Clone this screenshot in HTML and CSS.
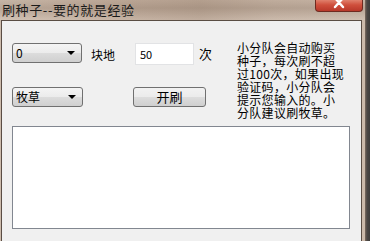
FILE: index.html
```html
<!DOCTYPE html>
<html lang="zh-CN">
<head>
    <meta charset="UTF-8">
    <title>刷种子--要的就是经验</title>
    <link rel="stylesheet" href="styles.css">
</head>
<body>
    <div class="window">
        <!-- title bar -->
        <div class="titlebar">
            <span class="title">刷种子--要的就是经验</span>
            <div class="close-btn">
                <svg width="12" height="9" viewBox="0 0 12 9">
                    <path d="M2 -2 L10 7 M10 -2 L2 7" stroke="#fff" stroke-width="2.4" stroke-linecap="round"/>
                </svg>
            </div>
        </div>

        <div class="client">
            <div class="top">
                <div class="controls">
                    <div class="row">
                        <div class="combo combo-count"><span>0</span><i class="arrow"></i></div>
                        <span class="label">块地</span>
                        <div class="edit">50</div>
                        <span class="label label-times">次</span>
                    </div>
                    <div class="row row-second">
                        <div class="combo combo-seed"><span>牧草</span><i class="arrow"></i></div>
                        <div class="button">开刷</div>
                    </div>
                </div>
                <p class="tip">
                    小分队会自动购买<br>
                    种子，每次刷不超<br>
                    过100次，如果出现<br>
                    验证码，小分队会<br>
                    提示您输入的。小<br>
                    分队建议刷牧草。
                </p>
            </div>
            <div class="log"></div>
        </div>
    </div>
    <div class="desk-edge"></div>
</body>
</html>
```

FILE: styles.css
```css
body {
    margin: 0;
    width: 370px;
    height: 241px;
    overflow: hidden;
    display: flex;
    font-family: "Noto Sans CJK SC", "Noto Sans", sans-serif;
    font-size: 12px;
    color: #000;
    background: #4a4644;
}
.window {
    width: 365px;
    height: 241px;
    display: flex;
    flex-direction: column;
    background: linear-gradient(90deg, #cdbcad 0%, #c2ad9c 30%, #b9a493 55%, #c6b3a3 75%, #cbb9aa 100%);
}
.desk-edge {
    flex: 1;
    background: linear-gradient(90deg, #7d6c60 0px, #4c4744 2px, #3f3d3c 100%);
}
.titlebar {
    height: 20px;
    display: flex;
    align-items: flex-start;
    background: linear-gradient(180deg, rgba(120, 100, 85, 0.08) 0%, rgba(120, 100, 85, 0.25) 40%, rgba(255, 255, 255, 0.1) 100%);
}
.title {
    margin: 0 0 0 2px;
    font-size: 13px;
    line-height: 19px;
    letter-spacing: 0.6px;
    color: #1a1a1a;
}
.close-btn {
    margin-left: auto;
    margin-right: 2px;
    width: 46px;
    height: 11px;
    border: 1px solid #6e2a20;
    border-top: none;
    border-radius: 0 0 4px 4px;
    background: linear-gradient(180deg, #e0806c 0%, #cf4f3c 45%, #b8382a 100%);
    display: flex;
    justify-content: center;
    align-items: flex-start;
}
.client {
    flex: 1;
    margin: 0 3px 0 1px;
    border: 1px solid #5a4d44;
    border-bottom: none;
    background: #f0f0f0;
    padding: 22px 0 0 10px;
}
.top {
    height: 83px;
    display: flex;
}
.controls {
    width: 225px;
}
.row {
    height: 22px;
    display: flex;
    align-items: center;
}
.row-second {
    margin-top: 22px;
    height: 20px;
}
.combo {
    height: 18px;
    border: 1px solid #707070;
    border-radius: 3px;
    background: linear-gradient(180deg, #f4f4f4 0%, #ebebeb 50%, #dcdcdc 51%, #cfcfcf 100%);
    display: flex;
    align-items: center;
    justify-content: space-between;
    padding: 0 6px 0 3px;
    box-sizing: content-box;
}
.combo-count {
    width: 59px;
    align-self: flex-start;
}
.combo-seed {
    width: 60px;
}
.combo span {
    line-height: 16px;
}
.arrow {
    width: 0;
    height: 0;
    border-left: 4px solid transparent;
    border-right: 4px solid transparent;
    border-top: 4px solid #000;
}
.label {
    margin-left: 9px;
    font-size: 12px;
}
.label-times {
    margin-left: 5px;
    align-self: flex-start;
    margin-top: 1px;
    font-size: 13px;
}
.edit {
    margin-left: 20px;
    width: 53px;
    height: 20px;
    border: 1px solid #e2e3e5;
    background: #fff;
    padding-left: 4px;
    line-height: 20px;
    font-size: 11px;
}
.button {
    margin-left: 50px;
    width: 71px;
    height: 18px;
    border: 1px solid #707070;
    border-radius: 3px;
    background: linear-gradient(180deg, #f2f2f2 0%, #ebebeb 50%, #dddddd 51%, #cfcfcf 100%);
    text-align: center;
    line-height: 18px;
    font-size: 13px;
}
.tip {
    margin: -2px 0 0;
    font-size: 12px;
    line-height: 13px;
    letter-spacing: 0.3px;
    white-space: nowrap;
}
.log {
    width: 336px;
    height: 101px;
    border: 1px solid #828790;
    background: #fff;
}
```
